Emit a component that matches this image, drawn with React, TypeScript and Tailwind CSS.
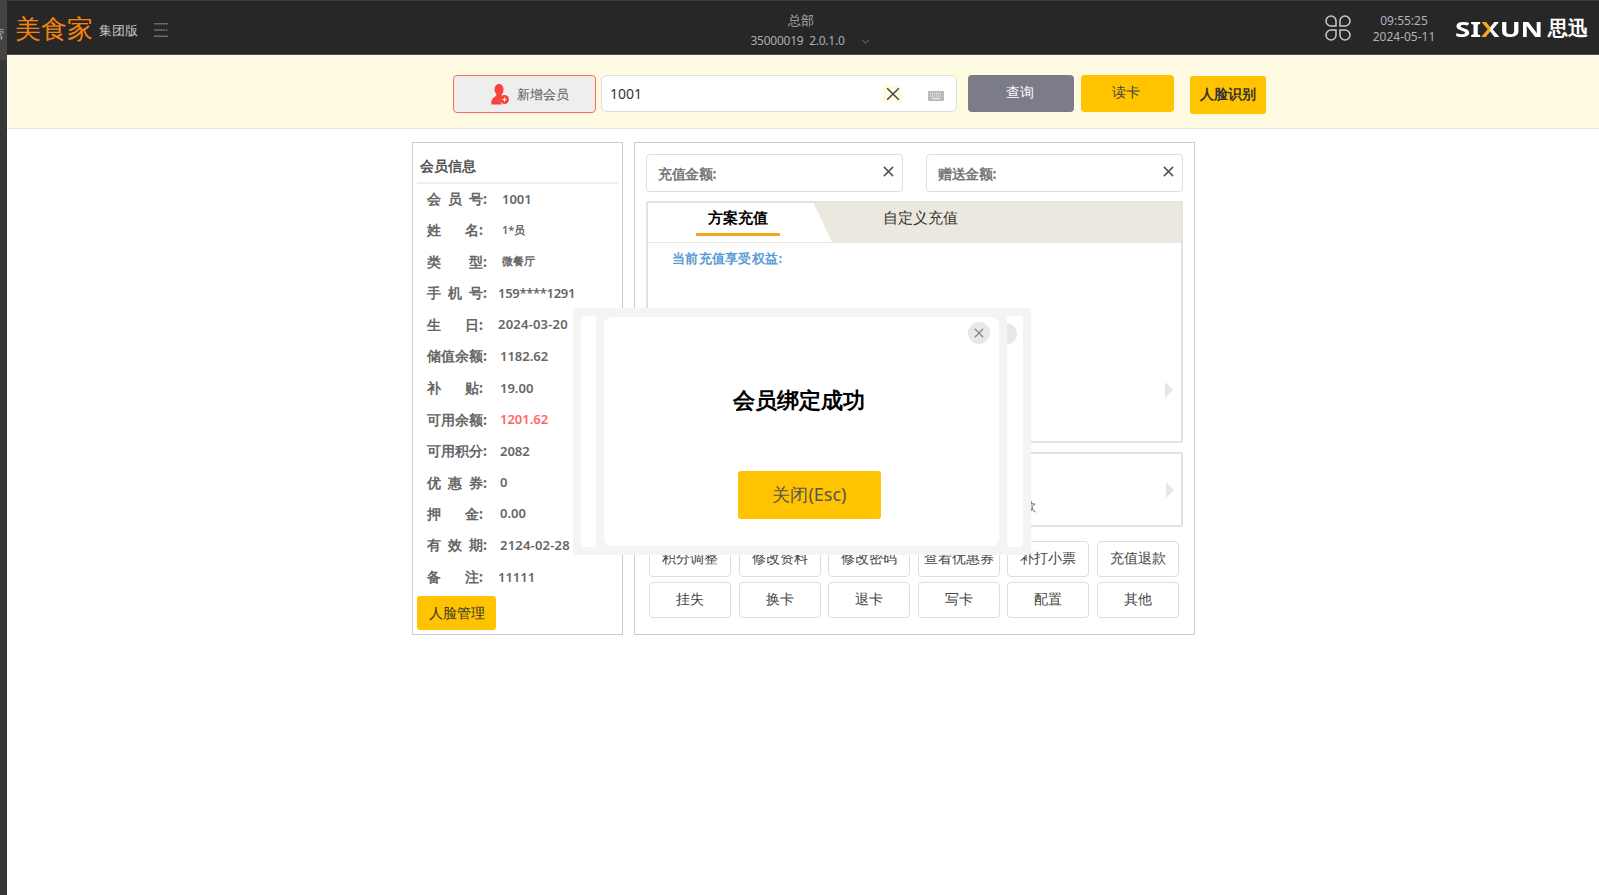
import React from "react";

const YELLOW = "bg-[#ffc300]";

function X({ className, stroke = "#555", width = 2 }: { className: string; stroke?: string; width?: number }) {
  return (
    <svg viewBox="0 0 12 12" className={className} fill="none" stroke={stroke} strokeWidth={width}>
      <path d="M1 1 11 11M11 1 1 11" />
    </svg>
  );
}

const rows: { chars: string[]; w: string; val: string; valCls: string; rowCls: string }[] = [
  { chars: ["会", "员", "号:"], w: "w-[60px]", val: "1001", valCls: "text-[13px] text-[#666] ml-[15px]", rowCls: "h-[30px]" },
  { chars: ["姓", "名:"], w: "w-[56px]", val: "1*员", valCls: "text-[11px] text-[#666] ml-[19px]", rowCls: "h-[32px]" },
  { chars: ["类", "型:"], w: "w-[60px]", val: "微餐厅", valCls: "text-[10.500px] text-[#666] ml-[15px]", rowCls: "h-[31px]" },
  { chars: ["手", "机", "号:"], w: "w-[60px]", val: "159****1291", valCls: "text-[13px] text-[#666] ml-[11px] tracking-[-0.3px]", rowCls: "h-[32px]" },
  { chars: ["生", "日:"], w: "w-[56px]", val: "2024-03-20", valCls: "text-[13px] text-[#666] ml-[15px] tracking-[0.2px]", rowCls: "h-[31px]" },
  { chars: ["储值余额:"], w: "w-[60px]", val: "1182.62", valCls: "text-[13px] text-[#666] ml-[13px]", rowCls: "h-[32px]" },
  { chars: ["补", "贴:"], w: "w-[56px]", val: "19.00", valCls: "text-[13px] text-[#666] ml-[17px]", rowCls: "h-[32px]" },
  { chars: ["可用余额:"], w: "w-[60px]", val: "1201.62", valCls: "text-[13px] text-[#ff6666] ml-[13px]", rowCls: "h-[31px]" },
  { chars: ["可用积分:"], w: "w-[60px]", val: "2082", valCls: "text-[13px] text-[#666] ml-[13px]", rowCls: "h-[32px]" },
  { chars: ["优", "惠", "券:"], w: "w-[60px]", val: "0", valCls: "text-[13px] text-[#666] ml-[13px]", rowCls: "h-[31px]" },
  { chars: ["押", "金:"], w: "w-[56px]", val: "0.00", valCls: "text-[13px] text-[#666] ml-[17px]", rowCls: "h-[31px]" },
  { chars: ["有", "效", "期:"], w: "w-[60px]", val: "2124-02-28", valCls: "text-[13px] text-[#666] ml-[13px] tracking-[0.2px]", rowCls: "h-[32px]" },
];

const actions = [
  ["积分调整", "修改资料", "修改密码", "查看优惠券", "补打小票", "充值退款"],
  ["挂失", "换卡", "退卡", "写卡", "配置", "其他"],
];

function Label({ chars, w }: { chars: string[]; w: string }) {
  return (
    <div className={`${w} mb-[1px] flex shrink-0 justify-between text-[14px] font-bold text-[#666]`}>
      {chars.map((c) => (
        <span key={c}>{c}</span>
      ))}
    </div>
  );
}

export default function App() {
  return (
    <div className="relative flex h-[895px] w-[1599px] overflow-hidden bg-white font-['Noto_Sans','Noto_Sans_CJK_SC',sans-serif]">
      <div className="relative w-[7px] shrink-0 overflow-hidden bg-[#363636]">
        <div className="h-[60px] bg-[#444444]" />
        <span className="absolute top-[26px] left-[-8px] text-[12px] leading-[16px] text-[#c8c8c8]">营</span>
      </div>
      <div className="flex min-w-0 flex-1 flex-col">
        {/* Header */}
        <header className="flex h-[55px] shrink-0 items-center border-t border-b border-t-[#3c3c3c] border-b-[#4a4a4a] bg-[#272727] pr-[11px] pl-[8px]">
          <span className="text-[26px] leading-none text-[#f7830f]">美食家</span>
          <span className="ml-[6px] mt-[6px] text-[13px] leading-none text-[#c4c8cc]">集团版</span>
          <svg viewBox="0 0 14 14" className="ml-[16px] mt-[5px] h-[14px] w-[14px]" fill="none" stroke="#6a6a70" strokeWidth="1.4">
            <path d="M0 .7h14M0 7h11M0 13.300h14" />
            <path d="M12 5.500 14 7l-2 1.500z" fill="#6a6a70" stroke="none" />
          </svg>
          <div className="ml-[563px] flex w-[140px] flex-col items-center pt-[6px] text-[#a9adb2]">
            <span className="text-[13px] leading-[20px]">总部</span>
            <div className="mt-[1px] ml-[18px] flex items-center text-[12px] leading-[20px]">
              <span className="whitespace-pre tracking-[-0.250px]">35000019  2.0.1.0</span>
              <svg viewBox="0 0 10 6" className="ml-[16px] h-[5px] w-[9px]" fill="none" stroke="#8a8a8a" strokeWidth="1">
                <path d="M1 1l4 4 4-4" />
              </svg>
            </div>
          </div>
          <div className="flex-1" />
          <svg viewBox="0 0 26 26" className="mt-[1px] h-[26px] w-[26px]" fill="none" stroke="#c9c9c9" strokeWidth="1.5">
            <path d="M11 11H6A5 5 0 1 1 11 6zM15 11H20A5 5 0 1 0 15 6zM11 15H6A5 5 0 1 0 11 20zM15 15H20A5 5 0 1 1 15 20z" />
          </svg>
          <div className="ml-[20px] flex w-[66px] flex-col items-center pt-[2px] text-[12px] leading-[16px] text-[#aeb4bb]">
            <span>09:55:25</span>
            <span>2024-05-11</span>
          </div>
          <div className="ml-[18px] flex items-center text-white">
            <span className="inline-block w-[87px] origin-left scale-x-[1.26] whitespace-nowrap font-['Liberation_Sans',sans-serif] text-[22px] leading-none font-bold">
              SI<span className="bg-[linear-gradient(90deg,#f5a91a_50%,#ffffff_50%)] bg-clip-text text-transparent">X</span>UN
            </span>
            <span className="ml-[6px] text-[20px] leading-none font-bold">思迅</span>
          </div>
        </header>

        {/* Search band */}
        <div className="flex h-[74px] shrink-0 items-start border-b border-[#e3e3e3] bg-[#fffbe3] pt-[20px] pl-[446px]">
          <button className="flex h-[38px] w-[143px] items-center rounded-[4px] border border-[#ff6a5c] bg-[#eeeeee] pl-[37px] text-[13px] text-[#555]">
            <svg viewBox="0 0 18 21" className="h-[21px] w-[18px]">
              <path d="M8 0c3 0 4.500 2.500 4.500 5.500 0 2.500-1 4-2 5.500l1 1.500A5.500 5.500 0 0 0 11 20.500H0.500c-.8-4 1-7 4.500-8.500l.5-1.500C4.500 9 3.500 7.500 3.500 5.500 3.500 2.500 5 0 8 0z" fill="#f6453c" />
              <circle cx="13.500" cy="15.500" r="4.500" fill="#f6453c" />
              <path d="M11.500 15.500h4M13.500 13.500v4" stroke="#fff" strokeWidth="1" />
            </svg>
            <span className="ml-[8px] mt-[1px]">新增会员</span>
          </button>
          <div className="ml-[5px] flex h-[37px] w-[356px] items-center rounded-[6px] border border-[#dddddd] bg-white pl-[8px] text-[14px] text-[#333]">
            <span>1001</span>
            <div className="ml-[241px] flex h-[18px] w-[19px] items-center justify-center bg-[#fffbe3]">
              <X className="h-[14px] w-[14px]" stroke="#444" width={1.3} />
            </div>
            <svg viewBox="0 0 16 10" className="ml-[26px] mt-[4px] h-[10px] w-[16px]">
              <rect width="16" height="10" rx="1" fill="#b9b9b9" />
              <path d="M2 2.500h12M2 5h12" stroke="#fff" strokeWidth=".9" strokeDasharray="1 1" />
              <path d="M4 7.700h8" stroke="#fff" strokeWidth=".9" />
            </svg>
          </div>
          <button className="ml-[11px] h-[37px] w-[106px] rounded-[4px] bg-[#7b7c87] pr-[2px] pb-[4px] text-[14px] text-white">查询</button>
          <button className={`ml-[7px] h-[37px] w-[93px] rounded-[4px] ${YELLOW} pr-[3px] pb-[4px] text-[14px] font-medium text-[#444]`}>读卡</button>
          <button className={`ml-[16px] mt-[1px] h-[38px] w-[76px] rounded-[3px] ${YELLOW} pb-[3px] text-[14px] font-bold text-[#333]`}>人脸识别</button>
        </div>

        {/* Content */}
        <div className="flex items-start gap-[11px] pt-[13px] pl-[405px]">
          {/* Member panel */}
          <div className="h-[493px] w-[211px] shrink-0 border border-[#cccccc] px-[4px]">
            <div className="mt-[13px] border-b-2 border-[#eeeeee] pb-[6px] pl-[3px] text-[14px] leading-[20px] font-bold text-[#555]">会员信息</div>
            <div className="pl-[10px]">
              {rows.map((r) => (
                <div key={r.val} className={`flex items-center ${r.rowCls}`}>
                  <Label chars={r.chars} w={r.w} />
                  <span className={`mt-[1px] font-semibold ${r.valCls}`}>{r.val}</span>
                </div>
              ))}
              <div className="flex h-[32px] items-center">
                <Label chars={["备", "注:"]} w="w-[56px]" />
                <span className="mt-[1px] ml-[15px] text-[13px] font-semibold text-[#666]">11111</span>
              </div>
            </div>
            <button className={`mt-[3px] h-[34px] w-[79px] rounded-[3px] ${YELLOW} pb-[2px] text-[14px] font-medium text-[#333]`}>人脸管理</button>
          </div>

          {/* Recharge panel */}
          <div className="h-[493px] w-[561px] shrink-0 border border-[#cccccc] px-[11px] pt-[11px]">
            <div className="flex gap-[23px]">
              {["充值金额:", "赠送金额:"].map((t) => (
                <div key={t} className="flex h-[38px] flex-1 items-center justify-between rounded-[4px] border border-[#dddddd] pr-[8px] pl-[11px] text-[14px] font-bold tracking-[-0.4px] text-[#777]">
                  <span>{t}</span>
                  <X className="mb-[3px] h-[11px] w-[11px]" stroke="#555" width={1.7} />
                </div>
              ))}
            </div>
            <div className="relative mt-[9px] h-[242px] rounded-[2px] border-2 border-[#e2e2e2]">
              <div className="flex h-[40px] items-start bg-[#ebe8df]">
                <div className="flex h-[39px] w-[184px] justify-center bg-white pr-[4px] [clip-path:polygon(0_0,90%_0,100%_100%,0_100%)]">
                  <div className="h-[33px] w-[84px] border-b-[3px] border-[#f0a81f] text-center text-[15px] leading-[28px] font-bold text-black">方案充值</div>
                </div>
                <div className="ml-[51px] text-[15px] leading-[28px] text-[#333]">自定义充值</div>
              </div>
              <div className="mt-[5px] ml-[24px] text-[13px] leading-[20px] font-bold tracking-[0.3px] text-[#5b9bd5]">当前充值享受权益:</div>
              <div className="absolute top-[179px] right-[8px] h-0 w-0 border-y-[8px] border-l-[8px] border-y-transparent border-l-[#e6e6e6]" />
            </div>
            <div className="relative mt-[9px] flex h-[75px] items-end justify-center rounded-[2px] border-2 border-[#e2e2e2] pb-[9px] pl-[230px] text-[13px] text-[#555]">
              <span>款</span>
              <div className="absolute top-[28px] right-[7px] h-0 w-0 border-y-[8px] border-l-[8px] border-y-transparent border-l-[#e6e6e6]" />
            </div>
            <div className="mt-[14px] flex flex-col gap-[5px] pl-[3px]">
              {actions.map((row, i) => (
                <div key={i} className="flex gap-[7.600px]">
                  {row.map((a) => (
                    <button key={a} className="h-[36px] w-[82px] rounded-[4px] border border-[#dddddd] bg-white pb-[3px] text-[14px] text-[#444]">
                      {a}
                    </button>
                  ))}
                </div>
              ))}
            </div>
          </div>
        </div>
      </div>

      {/* Dialog */}
      <div className="absolute top-[308px] left-[573px] h-[247px] w-[458px] rounded-[4px] bg-[#f4f4f4] p-[8px]">
        <div className="relative h-full rounded-[4px] bg-white pl-[15px]">
          <div className="absolute top-[7px] left-[414px] h-[22px] w-[22px] rounded-full bg-[#e8e8e8]" />
          <div className="relative h-[231px] w-[411px] bg-[#f4f4f4] px-[8px] pt-[1px]">
            <div className="relative flex h-[229px] flex-col items-center rounded-[8px] bg-white">
              <div className="absolute top-[5px] right-[9px] flex h-[22px] w-[22px] items-center justify-center rounded-full bg-[#e8e8e8]">
                <X className="h-[10px] w-[10px]" stroke="#888" width={1.6} />
              </div>
              <div className="mt-[66px] mr-[6px] text-[22px] leading-[32px] font-bold text-black">会员绑定成功</div>
              <button className={`mt-[56px] ml-[16px] h-[48px] w-[143px] rounded-[3px] ${YELLOW} pb-[2px] text-[18px] text-[#555]`}>关闭(Esc)</button>
            </div>
          </div>
        </div>
      </div>
    </div>
  );
}
